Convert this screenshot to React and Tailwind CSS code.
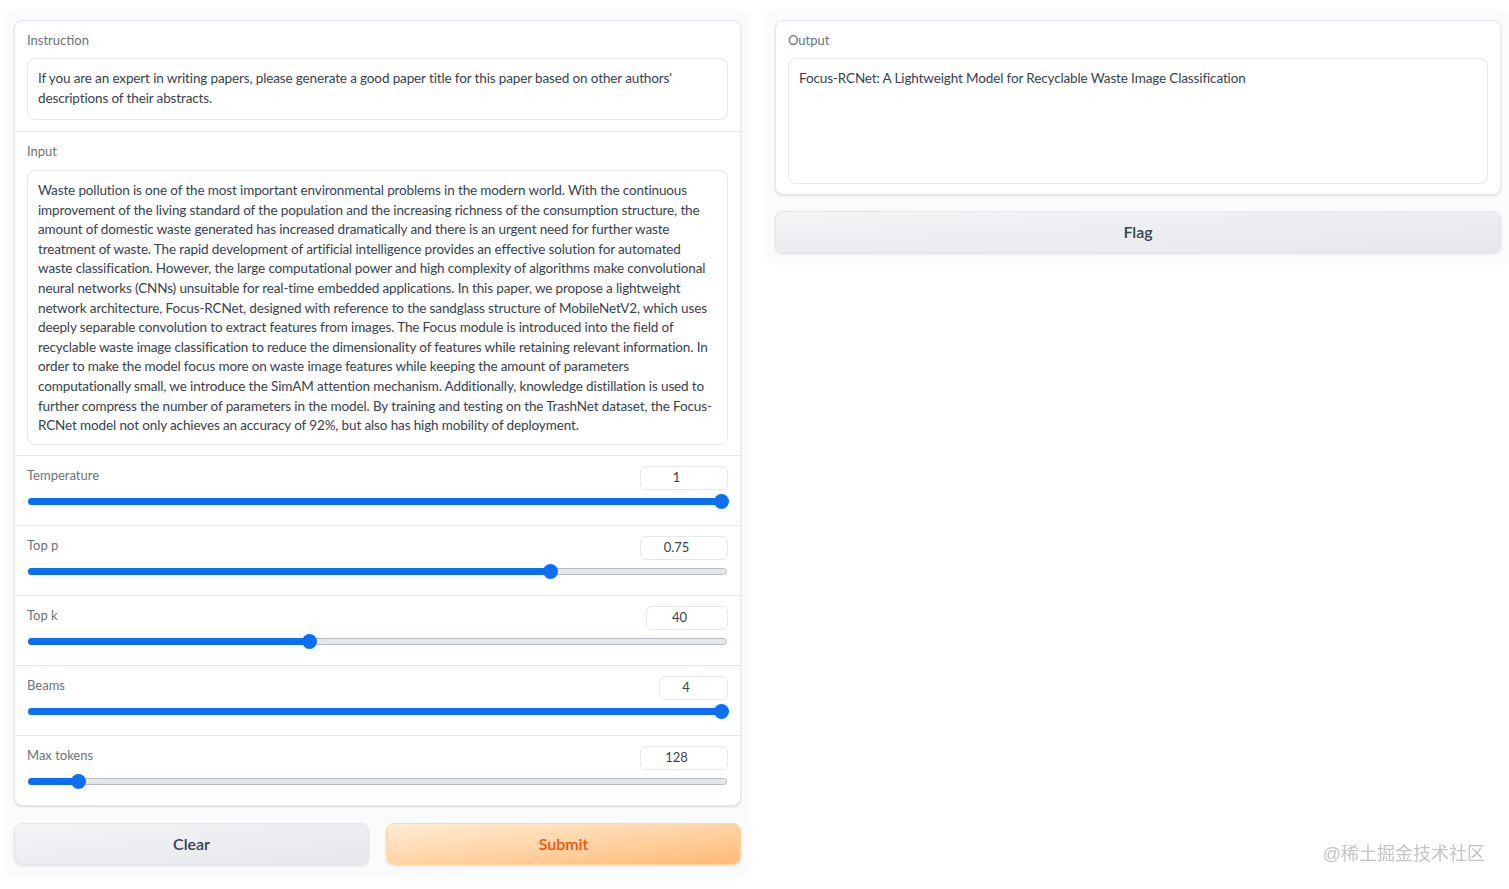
import React from "react";

const FONT = { fontFamily: "Lato, 'Noto Sans', sans-serif" };

const abstract =
  "Waste pollution is one of the most important environmental problems in the modern world. With the continuous improvement of the living standard of the population and the increasing richness of the consumption structure, the amount of domestic waste generated has increased dramatically and there is an urgent need for further waste treatment of waste. The rapid development of artificial intelligence provides an effective solution for automated waste classification. However, the large computational power and high complexity of algorithms make convolutional neural networks (CNNs) unsuitable for real-time embedded applications. In this paper, we propose a lightweight network architecture, Focus-RCNet, designed with reference to the sandglass structure of MobileNetV2, which uses deeply separable convolution to extract features from images. The Focus module is introduced into the field of recyclable waste image classification to reduce the dimensionality of features while retaining relevant information. In order to make the model focus more on waste image features while keeping the amount of parameters computationally small, we introduce the SimAM attention mechanism. Additionally, knowledge distillation is used to further compress the number of parameters in the model. By training and testing on the TrashNet dataset, the Focus-RCNet model not only achieves an accuracy of 92%, but also has high mobility of deployment.";

const sliders = [
  { label: "Temperature", value: "1", p: 1, box: "w-[88px]" },
  { label: "Top p", value: "0.75", p: 0.75, box: "w-[88px]" },
  { label: "Top k", value: "40", p: 0.4, box: "w-[82px]" },
  { label: "Beams", value: "4", p: 1, box: "w-[69px]" },
  { label: "Max tokens", value: "128", p: 0.0625, box: "w-[88px]" },
];

function Slider({ label, value, p, box }) {
  return (
    <div className="border-t border-[#e5e7eb] px-[12px] pt-[10px] h-[70px]">
      <div className="flex items-start justify-between">
        <span className="text-[13px] text-[#6b7280]">{label}</span>
        <div
          className={`${box} h-[24px] rounded-md border border-[#e5e7eb] flex items-center justify-center pr-[15px] text-[13px] text-[#374151]`}
        >
          {value}
        </div>
      </div>
      <div className="relative mt-[4px] h-[15px] mx-[1px]">
        <div className="absolute left-0 right-0 top-[4px] h-[7px] rounded-full bg-[#e5e7eb] border border-[#b8bcc3]" />
        <div
          className="absolute left-0 top-[4px] h-[7px] rounded-full bg-[#0a6ff0]"
          style={{ width: `${7 + p * 686}px` }}
        />
        <div
          className="absolute top-0 h-[15px] w-[15px] -ml-[7px] rounded-full bg-[#0a6ff0]"
          style={{ left: `${7 + p * 686}px` }}
        />
      </div>
    </div>
  );
}

export default function App() {
  return (
    <div className="min-h-[889px] bg-white text-[#374151]" style={FONT}>
      <div className="flex items-start gap-[18px] pl-[6px] pt-[12px]">
        {/* left column */}
        <div className="w-[743px] rounded-md bg-[#fafbfc] shadow-[0_0_6px_rgba(0,0,0,0.04)] px-[8px] pt-[8px] pb-[10px]">
          <div className="rounded-lg border border-[#e5e7eb] bg-white shadow-sm">
            <div className="px-[12px] pt-[10px] pb-[11px]">
              <div className="text-[13px] text-[#6b7280] leading-[18px]">Instruction</div>
              <div className="mt-[9px] rounded-lg border border-[#e5e7eb] px-[10px] py-[10px] text-[13.5px] tracking-[-0.13px] leading-[19.6px] text-[#374151] min-h-[62px]">
                If you are an expert in writing papers, please generate a good paper title for this paper based on other authors' descriptions of their abstracts.
              </div>
            </div>
            <div className="border-t border-[#e5e7eb] px-[12px] pt-[10px] pb-[10px]">
              <div className="text-[13px] text-[#6b7280] leading-[18px]">Input</div>
              <div className="mt-[10px] rounded-lg border border-[#e5e7eb] px-[10px] pt-[10px] pb-[8px] text-[13.5px] tracking-[-0.13px] leading-[19.6px] text-[#374151]">
                {abstract}
              </div>
            </div>
            {sliders.map((s) => (
              <Slider key={s.label} {...s} />
            ))}
          </div>
          <div className="mt-[17px] flex gap-[17px]">
            <button className="flex-1 h-[42px] rounded-lg border border-[#e5e7eb] bg-gradient-to-br from-[#f3f4f6] to-[#e5e7eb] text-[16px] font-semibold text-[#374151] shadow-sm">
              Clear
            </button>
            <button className="flex-1 h-[42px] rounded-lg border border-[#fed7aa] bg-gradient-to-br from-[#ffedd5] to-[#fdba74] text-[16px] font-semibold text-[#ea580c] shadow-sm">
              Submit
            </button>
          </div>
        </div>

        {/* right column */}
        <div className="w-[742px] rounded-md bg-[#fafbfc] shadow-[0_0_6px_rgba(0,0,0,0.04)] px-[8px] pt-[8px] pb-[9px]">
          <div className="rounded-lg border border-[#e5e7eb] bg-white shadow-sm px-[12px] pt-[10px] pb-[10px]">
            <div className="text-[13px] text-[#6b7280] leading-[18px]">Output</div>
            <div className="mt-[9px] h-[126px] rounded-lg border border-[#e5e7eb] px-[10px] py-[10px] text-[13.5px] tracking-[-0.13px] leading-[19.6px] text-[#374151]">
              Focus-RCNet: A Lightweight Model for Recyclable Waste Image Classification
            </div>
          </div>
          <button className="mt-[16px] w-full h-[42px] rounded-lg border border-[#e5e7eb] bg-gradient-to-br from-[#f3f4f6] to-[#e5e7eb] text-[16px] font-semibold text-[#374151] shadow-sm">
            Flag
          </button>
        </div>
      </div>
      <div
        className="fixed right-[24px] top-[841px] text-[18px] text-[#c4c4c4]"
        style={{ fontFamily: "'Liberation Sans', 'Noto Sans CJK SC', sans-serif" }}
      >
        @稀土掘金技术社区
      </div>
    </div>
  );
}
